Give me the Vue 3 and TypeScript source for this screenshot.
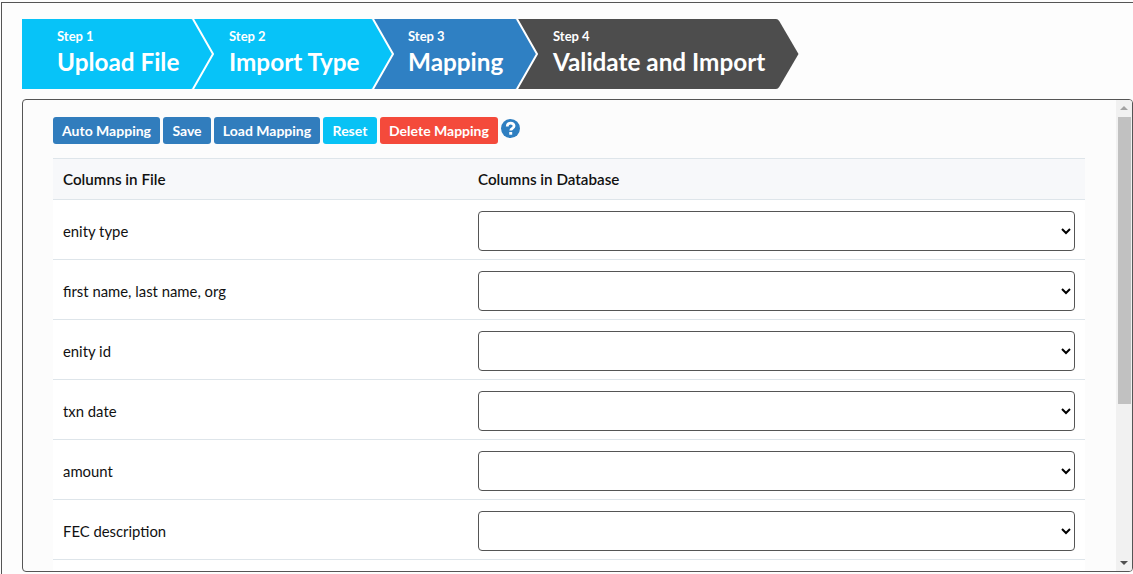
<script setup lang="ts">
interface Step { label: string; title: string; width: number; inset: number; color: string }
const steps: Step[] = [
  { label: 'Step 1', title: 'Upload File', width: 171, inset: 35, color: '#07c3f8' },
  { label: 'Step 2', title: 'Import Type', width: 180, inset: 36, color: '#07c3f8' },
  { label: 'Step 3', title: 'Mapping', width: 144, inset: 35, color: '#2f80c3' },
  { label: 'Step 4', title: 'Validate and Import', width: 261, inset: 36, color: '#4d4d4d' },
]
const shape = (w: number) =>
  `M0 0H${w - 2}Q${w} 0 ${w + 1.2} 2L${w + 20.5} 35L${w + 1.2} 68Q${w} 70 ${w - 2} 70H0Z`
const edge = (w: number) => `M${w} 0L${w + 20} 35L${w} 70`
const buttons = [
  { text: 'Auto Mapping', kind: 'blue', width: 107 },
  { text: 'Save', kind: 'blue', width: 48 },
  { text: 'Load Mapping', kind: 'blue', width: 106 },
  { text: 'Reset', kind: 'cyan', width: 54 },
  { text: 'Delete Mapping', kind: 'red', width: 118 },
]
const rows = ['enity type', 'first name, last name, org', 'enity id', 'txn date', 'amount', 'FEC description', '', '', '', '']
</script>

<template>
  <div class="frame">
    <div class="steps">
      <div
        v-for="(s, i) in steps"
        :key="s.label"
        class="step"
        :style="{ width: s.width + 'px', paddingLeft: s.inset + 'px', zIndex: 10 - i }"
      >
        <svg class="shape" :width="s.width + 22" height="70" aria-hidden="true">
          <path :d="shape(s.width)" :fill="s.color" />
          <path v-if="i < 3" :d="edge(s.width)" fill="none" stroke="#fff" stroke-width="2" />
        </svg>
        <div class="step-label">{{ s.label }}</div>
        <div class="step-title">{{ s.title }}</div>
      </div>
    </div>
    <div class="card">
      <div class="content">
        <div class="toolbar">
          <button
            v-for="b in buttons"
            :key="b.text"
            class="btn"
            :class="b.kind"
            :style="{ width: b.width + 'px' }"
            type="button"
          >{{ b.text }}</button>
          <svg class="help" width="19" height="19" viewBox="0 0 18 18" aria-hidden="true">
            <circle cx="9" cy="9" r="9" fill="#2f7fc1" />
            <path d="M5.9 7.1C6 5.1 7.4 3.9 9.1 3.9C11 3.9 12.4 5 12.4 6.7C12.4 8.9 9.2 8.8 9.2 11" fill="none" stroke="#fff" stroke-width="2.6" />
            <rect x="7.8" y="12.3" width="2.8" height="2.6" fill="#fff" />
          </svg>
        </div>
        <table class="map">
          <thead>
            <tr>
              <th class="c1">Columns in File</th>
              <th>Columns in Database</th>
            </tr>
          </thead>
          <tbody>
            <tr v-for="(r, i) in rows" :key="i">
              <td class="c1">{{ r }}</td>
              <td class="c2"><select class="pick"><option></option></select></td>
            </tr>
          </tbody>
        </table>
      </div>
      <div class="scrollbar" aria-hidden="true">
        <span class="arrow up"></span>
        <span class="thumb"></span>
        <span class="arrow down"></span>
      </div>
    </div>
  </div>
</template>

<style>
html, body { margin: 0; background: #fdfdfd; overflow: hidden; }
</style>

<style scoped>
.frame {
  box-sizing: border-box;
  height: 572px;
  margin: 2px 0 0 1px;
  padding: 16px 0 0 20px;
  border-top: 1px solid #555;
  border-left: 1px solid #555;
  font-family: Lato, "Open Sans", sans-serif;
  color: #111;
}
.steps { display: flex; height: 70px; }
.step {
  position: relative;
  box-sizing: border-box;
  flex: none;
  height: 70px;
  padding-top: 8px;
  color: #fff;
}
.shape { position: absolute; left: 0; top: 0; z-index: -1; }
.step-label { font-size: 13px; font-weight: 700; line-height: 18px; }
.step-title { font-size: 24.3px; font-weight: 700; line-height: 34px; white-space: nowrap; }
.card {
  position: relative;
  box-sizing: border-box;
  height: 473px;
  width: 1111px;
  margin-top: 10px;
  border: 1px solid #555;
  border-radius: 4px;
  overflow: hidden;
  background: #fcfcfc;
}
.content { padding: 17px 30px 18px 30px; }
.scrollbar {
  position: absolute;
  top: 0;
  right: 0;
  bottom: 0;
  width: 16px;
  display: flex;
  flex-direction: column;
  align-items: center;
  background: #f1f1f1;
}
.thumb { width: 13px; height: 287px; background: #c1c1c1; }
.arrow { flex: none; width: 0; height: 0; border-left: 4px solid transparent; border-right: 4px solid transparent; }
.up { margin: 6px 0 7px; border-bottom: 4px solid #a3a3a3; }
.down { margin-top: auto; margin-bottom: 6px; border-top: 4px solid #505050; }
.toolbar { display: flex; align-items: flex-start; gap: 3px; height: 41px; }
.btn {
  height: 27px;
  padding: 0;
  border: 0;
  border-radius: 3px;
  color: #fff;
  font-family: inherit;
  font-size: 14px;
  font-weight: 700;
  white-space: nowrap;
}
.blue { background: #317dbd; }
.cyan { background: #08c2f5; }
.red { background: #f44a3b; }
.help { margin-top: 2px; }
.map { width: 1032px; border-collapse: collapse; table-layout: fixed; font-size: 14.85px; }
.map th {
  box-sizing: border-box;
  height: 41px;
  padding: 0 10px;
  background: #f7f8fa;
  border-top: 1px solid #dee5ea;
  border-bottom: 1px solid #dee5ea;
  font-size: 15.2px;
  font-weight: 600;
  text-align: left;
}
.map th.c1, .map td.c1 { width: 415px; }
.map td {
  box-sizing: border-box;
  height: 60px;
  padding: 0 10px;
  background: #fff;
  border-bottom: 1px solid #dee5ea;
}
.map td.c1 { padding-top: 2px; }
.map td.c2 { padding-top: 2px; }
.pick {
  display: block;
  box-sizing: border-box;
  width: 100%;
  height: 40px;
  border: 1px solid #555;
  border-radius: 4px;
  background: #fff;
  font-family: inherit;
  font-size: 14px;
}
</style>
